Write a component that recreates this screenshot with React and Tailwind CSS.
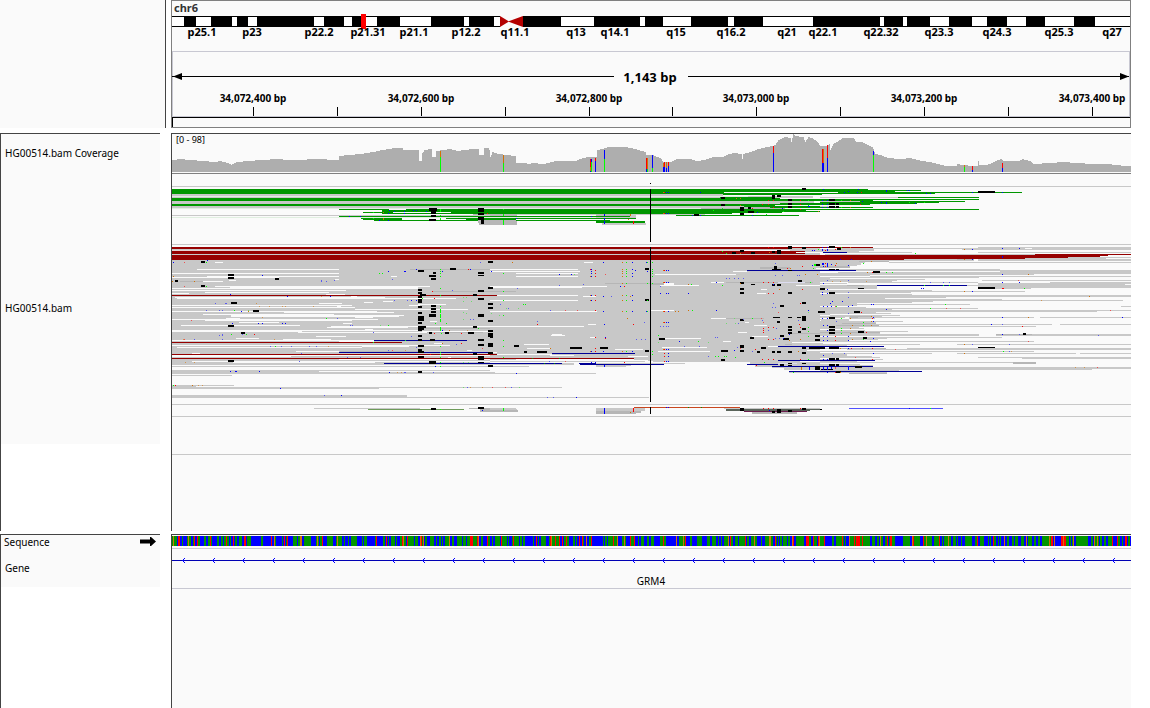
import React from "react";

const INK = "#000000";
const PAPER = "#fafafa";
const READ = "#c8c8c8";
const SHADE = "#b6b6b6";
const GREEN = "#009600";
const MAROON = "#960000";
const NAVY = "#000096";
const LIME = "#00ff00";
const BLUE = "#0000ff";
const RED = "#ff0000";
const ORANGE = "#d17105";
const PERI = "#5a5af0";

// Each entry is "x y", "x y x2" or "x y x2 y2" in thirds of a pixel, relative to the tile origin.
function toPath(text, ox, oy) {
  return text
    .split(",")
    .map((item) => {
      const n = item.trim().split(/\s+/).map(Number);
      const x = ox + (n.length === 2 ? Math.floor(n[0] / 3) : Math.round(n[0] / 3));
      const y = oy + (n.length === 4 ? Math.round(n[1] / 3) : Math.floor(n[1] / 3));
      const w = n.length === 2 ? 1 : ox + Math.round(n[2] / 3) - x;
      const h = n.length === 4 ? oy + Math.round(n[3] / 3) - y : 1;
      return `M${x} ${y}h${w}v${h}h${-w}z`;
    })
    .join("");
}

const tiles = [
  {
    x: 160,
    y: 128,
    layers: [
      [GREEN, "36 183 990 198,36 210 990 219,36 228 990 234,537 244 990,666 246 990 258,609 253 990,675 256 990,537 265 990,603 271 990,609 274 990,642 277 990"],
      [READ, "36 198 990 204,36 207 990 210,36 219 990 228,36 234 990 240,36 262 537,537 262 990"],
      ["#e0efe0", "36 205 990,36 241 990,36 268 990"],
      [PAPER, "687 244 738,609 250 666,699 253 873,666 259 810,726 271 858,726 274 918"],
      [SHADE, "939 258 990 261,954 276 990 285,957 285 990 291"],
      [MAROON, "36 357 990 363,36 369 990 378,36 381 990 396"],
      [READ, "36 363 990 366,36 378 990 381"],
      ["#e4d4d4", "36 367 990"],
      [INK, "807 240 831 249,813 249 828 258,813 261 828 267,807 273 828 279,954 240 972 252,954 255 972 261,954 267 972 276,963 276 972 288"],
      [LIME, "840 243 843 252,840 262,840 269 843 276,640 253,640 271"],
      [BLUE, "688 247,703 250,733 250,733 256,760 247,769 247,799 250,685 256,568 265,601 265,658 277,685 277"],
      [ORANGE, "670 253,670 271 672 276"],
      [RED, "982 256"],
    ],
  },
  {
    x: 490,
    y: 128,
    layers: [
      [GREEN, "0 183 990 198,0 210 990 219,0 228 990 240,0 243 990 252,0 252 876 258,0 265 420,0 271 438,0 274 318,318 276 465 285,558 262 927"],
      [READ, "0 198 699 204,0 207 774 210,0 219 972 228,0 234 762 240,774 204 969 210,0 258 645 261,0 285 81 291,318 258 438 270,336 285 468 291"],
      [GREEN, "699 199 990,690 207 846 210,870 225 990 228"],
      ["#e0efe0", "0 205 774,0 241 633,0 268 318"],
      [PAPER, "702 193 990,969 204 990 207,870 211 990,855 232 990,885 241 990,948 247 990,726 256 876,78 274 318,360 277 465"],
      [SHADE, "0 258 81 264,0 276 81 291,633 240 885 243,318 258 420 264,762 236 840 240"],
      [GREEN, "0 265 420,0 271 438,78 277 360,318 276 360 285,690 262 927"],
      [MAROON, "0 357 990 363,0 369 945 378,0 381 990 396"],
      [READ, "0 363 990 366,0 378 990 381,900 360 990 370,945 369 990 378"],
      ["#e4d4d4", "0 367 750"],
      [PAPER, "918 373 990"],
      [INK, "936 180 948 186,846 201 855 213,861 201 873 207,693 207 705 213,894 213 906 219,693 228 705 234,894 225 906 231,894 234 906 240,750 237 762 249,774 237 783 243,774 249 792 255,750 255 762 261,612 258 627 264,894 354 906 363,936 357 948 363,750 366 762 372,726 372 738 378,783 372 795 378,846 369 855 375,861 366 873 378"],
      [LIME, "40 243,39 258 42 264,39 276 42 291,697 241,709 376,669 247,955 217,955 232,880 250,828 259,985 364,697 370"],
      [BLUE, "529 193,535 193,631 193,529 256,535 256,342 258 345 264,342 270 345 276,342 279 345 288,303 265,79 271,606 262,630 262,787 262,802 253,877 241,955 235 960 238,967 367,972 367"],
      [RED, "523 193,523 256,430 280 432 288,835 217,850 217,931 217,817 229,835 229,850 238,931 229,931 244,787 241,835 358,850 358"],
      [ORANGE, "520 193,520 256,421 258 423 264,415 274,751 211,751 232,751 376,739 211,985 250,839 373"],
    ],
  },
  {
    x: 820,
    y: 128,
    layers: [
      [GREEN, "0 183 144 186,0 187 303,0 190 225,54 193 606,0 196 345,0 199 6,234 208 477,0 214 477,0 217 159,120 220 435,0 223 357,0 226 291,0 229 150,0 238 159,0 244 477"],
      [READ, "0 208 234,0 220 120,0 234 50 237"],
      [MAROON, "0 358 159,645 379 933,0 381 864 384,0 384 840 387,0 387 744 390,0 390 615 393,0 394 252"],
      [READ, "474 357 933 363,60 361 474,0 363 162 369,426 364 933,0 370 117,80 373 276,474 373 933,15 379 645,744 388 933,615 391 858,252 394 410,474 394 933"],
      [NAVY, "9 373 81"],
      [PAPER, "615 361 636,162 364 426"],
      [SHADE, "410 394 462"],
      [INK, "474 189 525 195,27 213 45 219,27 225 45 231,48 225 57 231,27 234 45 240,48 234 57 240,27 354 45 360,51 360 63 366"],
      [LIME, "64 217,64 238,64 358,268 223,313 223,285 376"],
      [BLUE, "9 184,115 184,199 187 201 192,262 187,268 187,73 193,85 190,112 193,319 196,331 196,457 193,547 193,7 217,22 217,126 220,184 223,199 222 201 228,286 226,7 229,22 229,7 238,22 238,7 358,22 358,457 364,547 361,598 361,6 364 9 369,22 363 24 369,547 384 549 390,457 394,60 394,95 394"],
      [RED, "124 193,121 229,15 367,46 364"],
      [ORANGE, "91 217,91 238,91 358,433 364,433 394"],
    ],
  },
  {
    x: 160,
    y: 260,
    layers: [
      [READ, "36 0 990 342,36 346 216,36 376 222,36 378 108 387,108 381 657 387,657 382 990,36 405 741 411,36 411 663 414,663 412 990,462 445 780"],
      [PAPER, "165 7 189,111 28 537,36 40 537,141 49 537,36 52 357,693 49 711,207 61 228,525 58 537,129 64 189,165 79 810,210 82 774,36 85 774,36 91 558,135 97 507,36 100 87,498 103 555,45 112 675,50 115 888,574 109 591,669 124 699,612 127 639,477 130 546,774 133 858,36 136 576,531 139 543,36 142 585,747 136 780,585 148 924,36 154 651,372 157 702,129 163 522,213 166 732,213 169 717,585 172 639,198 175 240,36 178 654,135 181 576,810 184 831,238 187 357,549 190 576,63 196 420,513 199 990,501 202 744,615 208 639,36 211 786,36 214 426,786 214 990,415 217 800,468 229 558,228 235 297,369 238 513,36 241 642,537 244 642,822 250 845,36 256 870,50 262 606,606 259 747,408 274 537,921 271 936,96 280 120,36 286 990,36 289 393,864 292 873,537 298 990,96 304 990,219 307 645,36 316 990,36 322 990,36 325 990,36 328 990,477 334 990"],
      [SHADE, "750 28 990,60 64 129,819 94 990,786 205 990,800 217 970,540 274 780"],
      [MAROON, "36 106 990,36 247 726,36 283 990,36 295 990"],
      [NAVY, "642 241 921,537 277 990,672 310 990"],
      ["#6e9b5a", "624 448 912"],
      [SHADE, "927 445 990,960 448 990 456"],
      [INK, "123 3 135 9,204 42 222 48,204 51 222 57,45 60 54 66,345 54 357 60,123 75 135 81,213 126 231 132,279 150 297 156,204 195 222 201,243 216 255 222,204 300 222 306,984 3 990 9,870 24 888 30,774 30 792 36,819 36 828 42,807 45 828 51,813 54 828 60,954 36 972 42,954 45 972 48,774 87 786 93,774 96 786 102,780 102 798 108,774 108 786 114,774 117 786 129,774 138 786 144,813 135 828 141,813 144 828 150,813 153 828 159,807 162 828 171,774 156 786 162,774 168 792 183,774 186 786 192,774 198 798 204,774 204 792 210,774 210 786 213,774 225 786 231,774 237 786 243,774 255 792 261,774 267 786 273,774 273 792 279,774 288 792 294,774 333 786 339,807 216 816 222,855 216 867 222,924 216 942 222,954 90 972 96,939 102 951 108,954 114 972 120,954 162 972 171,939 198 951 204,984 81 990 87,984 129 990 135,984 141 990 147,984 180 990 186,984 210 990 216,984 219 990 231,984 249 990 261,954 237 972 243,954 252 972 258,939 279 951 285,954 288 972 300,954 306 972 309,807 303 828 311,984 276 990 282,984 315 990 321,810 237 825 243,813 444 828 450,954 441 972 447"],
      [LIME, "139 7,658 40,667 40,841 28,841 34,841 40,841 49,139 79,841 85,841 106,223 151,499 175,841 138,841 147,840 150 843 159,840 162 843 174,840 177 843 186,859 190,826 190,685 196,840 201 843 213,787 115,844 220,214 223,259 223,736 241,640 247,346 259,841 259,841 283,841 276,841 292,841 307,841 319,841 448,955 205,40 376"],
      [BLUE, "142 1,40 7,307 46,685 34,733 34,736 34,931 28,847 34,769 28,211 103,382 109,511 109,754 121,769 121,244 154,295 190,307 190,367 190,376 190,847 211,211 334,226 334,229 334,298 334,688 337,361 385,826 319,967 451,544 406,217 190"],
      [PERI, "484 61,484 64,499 64,523 61,697 58,961 7,877 91,166 130,196 130,199 130,178 151,187 151,139 151,703 121,742 121,532 175,571 196,577 196,187 223,187 226,178 226,247 223,640 217,754 229,103 238,187 238,331 259,364 259,394 259,448 259,469 259,424 280,418 304,562 292,601 292,733 337,736 337,820 337,493 406,922 382,769 262,889 253,685 271,931 178,940 178"],
      [ORANGE, "103 64,40 49,37 64,265 154,868 211,847 250,97 376"],
      ["#d29650", "289 130,298 139,328 139,367 139,376 139,460 139,307 172,343 238,70 238,505 259,103 307,76 307,484 109,712 337,724 337,115 376,127 376,967 382,931 382,736 271,922 211"],
      ["#6edc6e", "910 112,919 112,934 124,910 124,910 157,919 160,910 178,661 196,910 307,925 307,910 382,265 151"],
      ["#f05050", "73 7,73 79,94 181,697 271,967 265,73 238"],
      [RED, "925 28,817 94,823 115,283 223,904 250,904 220,811 283,823 220,46 376"],
    ],
  },
  {
    x: 490,
    y: 260,
    layers: [
      [READ, "0 0 990 306,0 309 252 315,0 318 117 321,318 310 585,318 315 423 318,318 316 408 321,780 306 990 315,795 315 990 321,846 318 990 324,882 321 990 330,897 333 990 339,0 336 15 342,0 340 318,0 382 216,0 412 477,0 444 78 450,0 449 81,318 444 465 453,702 445 990"],
      [PAPER, "282 7 309,0 28 264,0 34 270,78 40 264,78 49 264,495 43 738,729 34 771,978 25 990,663 67 702,522 69 552 75,510 76 627,0 79 351,0 82 276,918 76 990,279 109 318,0 106 264,813 88 831,801 100 828,0 121 264,0 154 321,483 151 552,765 187 777,663 175 708,792 196 831,294 193 318,0 199 282,743 217 771,186 223 216,183 226 225,300 232 318,785 229 834,522 235 633,699 244 723,102 253 177,906 247 990,835 259 864,111 265 180,516 262 651,375 268 459,0 277 21,504 274 660,951 271 990,180 286 252,21 283 186,414 289 474,345 301 474,78 298 432,990 280 990,0 301 345,465 304 490,0 307 270,252 310 268,930 304 990"],
      [SHADE, "345 70 483,483 69 522 75,0 94 78,708 67 970,810 21 900 27,708 175 822,0 450 84 456,318 453 453 459,318 459 438 462,786 456 921 462,897 220 990,885 253 906"],
      ["#dcdcf0", "864 67 945,864 310 920"],
      [MAROON, "0 106 21,0 283 21,0 295 432"],
      [NAVY, "771 31 990,186 280 435,0 310 216,267 310 318,270 313 522,771 313 864,864 301 990,864 259 990,846 319 990,897 334 990"],
      ["#c8461e", "432 442 750"],
      ["#5a645a", "708 447 960 453,750 448 990"],
      ["#6e1e50", "762 454 951"],
      [INK, "0 3 9 9,0 81 9 87,0 129 9 135,0 141 9 147,0 180 9 186,0 210 9 216,0 219 9 234,0 249 9 261,0 276 9 282,0 315 9 321,465 24 477 30,465 117 477 123,465 270 477 276,72 255 87 261,102 273 111 279,141 273 171 279,240 261 276 267,330 261 354 267,507 234 525 240,750 66 762 72,783 72 795 75,750 84 762 90,750 96 762 102,846 72 855 78,861 72 873 78,924 60 936 66,852 18 861 27,846 27 873 30,894 30 906 32,975 12 990 18,894 96 906 102,936 126 948 132,870 135 882 141,849 171 870 174,894 171 906 174,921 171 933 174,936 168 948 183,861 183 870 189,894 198 906 204,894 207 906 213,894 216 906 222,936 204 948 210,924 213 933 219,750 177 762 183,870 225 882 231,878 234 897 240,780 231 792 237,813 261 828 267,750 255 762 264,693 270 714 276,693 297 705 303,750 270 762 276,802 273 811 279,846 273 855 279,861 273 873 279,894 273 906 279,936 261 948 267,957 261 990 267,936 276 948 282,870 312 882 318,894 309 906 312,894 315 906 319,936 309 948 312,975 318 990 330,975 225 990 231,975 237 990 243,984 153 990 159,750 444 762 453,846 453 855 459,861 447 873 459,894 450 906 456,936 444 948 450"],
      [LIME, "409 7,409 28,409 34,409 40,409 49,487 7,487 28,487 34,487 40,487 49,472 7,409 70,487 70,472 70,604 73,409 106,409 121,472 121,409 154,472 154,607 151,100 133,106 133,40 40,40 94,40 121,40 166,40 241,40 259,40 292,787 175,505 226,955 202,955 214,955 229,961 67,697 76,972 12 978 18,970 24,676 289,685 289,703 289,709 289,736 292,626 244,487 283,409 274,487 274,39 444 42 453,472 154,955 298,910 337,823 307"],
      [BLUE, "340 7,304 28,304 34,304 40,304 49,427 7,427 28,427 40,427 49,469 7,472 34,436 31,4 34,208 43,244 43,529 31,535 31,303 106,427 106,340 109,535 67,529 67,529 100,535 100,595 100,511 100,427 121,304 121,469 154,535 154,427 154,340 154,679 151,343 193,535 187,529 187,346 232,568 244,535 268,529 268,535 280,535 289,535 304,529 304,427 274,304 274,340 274,259 412,343 444 345 462,342 315 345 321,679 67,967 16,391 79,79 340,955 151,733 271,838 451,529 442,535 442,898 223,880 235,958 321 960 330,850 73,304 307,316 307"],
      [PERI, "364 109,280 73,208 76,82 85,253 43,709 55,718 55,733 55,745 55,760 55,856 46,877 46,922 46,928 46,856 10,31 133,55 145,181 151,142 184,439 238,454 238,466 238,463 187,511 199,520 199,529 199,535 199,511 79,850 130,856 142,847 142,760 178,817 181,925 181,745 190,676 232,682 232,583 259,628 259,172 412,190 412,64 382,178 304,859 205,835 211,856 235,868 235,787 274,655 289,742 262"],
      [RED, "301 28,316 31,316 40,316 49,523 31,523 67,316 106,316 121,403 79,316 151,523 154,523 187,523 268,523 280,523 289,523 304,316 274,316 265,430 193,142 193,346 235,430 444 432 456,835 67,850 67,820 67,892 24,936 20,835 100,850 100,931 130,937 88,820 205,820 211,820 217,835 202,850 202,835 238,850 238,931 202,817 298,835 298,850 298,931 298,928 193,820 445,835 445,850 445,403 307,799 316,316 232,796 268,931 445"],
      [ORANGE, "397 7,397 28,397 34,397 40,397 49,67 7,520 31,520 67,595 73,397 70,397 106,301 106,301 121,397 121,397 154,520 154,595 151,565 154,412 175,421 109,520 187,520 268,301 274,397 274,301 49,901 24,946 43,982 43,898 240,931 238,925 274,934 321 936 330,421 457,751 70,181 265,556 154,868 88"],
      ["#f05050", "346 43,226 151,262 151,7 382,46 382,814 175,820 188,226 304,751 265,865 157"],
      ["#6edc6e", "253 43,85 145,50 145,709 190,736 190,505 247,655 247,733 175,4 160,28 166,955 157,88 382"],
      [GREEN, "126 295,208 295,163 310,193 310,595 442,634 442"],
    ],
  },
  {
    x: 820,
    y: 260,
    layers: [
      [READ, "0 0 207 3,117 1 462,474 1 933,207 7 933,0 3 135 9,0 9 123 15,0 15 111 18,0 18 90 24,0 27 540 33,540 30 933 42,0 37 642,0 40 933,0 42 642 45,0 45 150 48,150 49 933,0 51 477 54,0 55 30,0 58 315,486 61 933,0 60 231 63,0 63 216 66,84 67 690,690 67 933,0 70 81,474 70 933,474 73 915,80 76 474,0 75 170 81,474 75 933 84,0 81 171 87,474 85 633,0 90 171 96,0 90 336 93,0 94 615,0 97 273,0 102 276 105,0 105 933 108,0 108 933 111,0 112 378,0 115 195,0 118 546,0 121 909,0 124 339,0 127 276,0 130 110,0 133 450,0 136 111,903 139 933,0 141 138 144,0 144 474 147,0 149 216,0 151 933,0 154 830,0 157 168,0 160 213,0 163 30,30 166 240,0 169 186,0 172 78,87 172 642,660 172 933,87 175 165,0 178 87,3 181 87,0 184 249,0 187 168,0 190 168,0 193 696,720 193 933,0 196 177,0 199 648,0 202 117,0 205 132,0 211 135,0 214 264,0 216 180 222,0 223 477,546 222 933 228,0 226 933,0 231 546 234,0 235 201,0 238 174,0 241 87,0 244 642,0 250 9,0 253 300,411 253 933,0 256 81,0 259 81,0 265 198,261 264 933 270,81 268 480,0 274 642,0 280 336,411 280 768,780 280 933,0 283 81,0 286 81,0 289 156,0 292 180,474 292 933,606 295 933,0 298 189,0 301 81,0 304 111,0 307 579,0 313 120,0 316 159,0 321 933 327,0 328 816,0 331 237,0 337 201"],
      [PAPER, "0 37 54,477 220 528 228,474 67 690,75 172 87"],
      [SHADE, "117 4 207,0 18 90 24,81 76 132,66 189 168,90 172 114,90 169 153,528 223 636,579 307 648 312,87 340 201,0 217 180,48 196 177,27 265 198"],
      [NAVY, "0 31 108,171 76 441,0 259 192,0 301 165,0 319 159,0 334 306"],
      ["#5050ff", "87 445 369"],
      [INK, "159 33 180 39,27 27 45 31,48 27 57 31,474 81 525 87,0 84 15 90,114 84 132 87,27 96 45 102,102 153 120 159,0 153 15 159,27 171 45 177,27 198 45 204,27 207 45 213,27 216 45 222,114 213 132 219,129 231 141 237,609 219 618 225,0 261 15 267,27 261 57 267,474 261 525 264,27 294 45 300,48 294 57 300,27 312 45 318,48 312 57 318,105 318 126 324,3 327 39 330,48 333 63 339,0 447 6 450"],
      [BLUE, "6 9 12 15,22 9 24 21,10 19,34 13,85 16,547 43,547 67,598 67,10 70,457 94,22 88,304 85,310 85,7 97,7 103,22 100,37 124,31 130,67 124,10 139,22 139,34 139,85 139,154 133,160 133,97 136,199 148,547 172,907 172,160 172,160 184,7 175,22 175,514 193,10 196,22 196,22 211,85 229,85 241,10 229,22 229,10 241,22 241,160 235,547 223,85 265,160 280,10 286,10 298,22 298,9 321 12 330,22 321 24 330,34 321 36 327,85 319 87 330,22 337,268 445,151 244"],
      [PERI, "85 61,22 61,331 67,370 67,388 67,85 97,85 112,85 160,49 184,547 193,835 226,457 253,568 253,73 280,37 280,598 223,285 445,568 274"],
      [RED, "16 10,16 19,46 16,157 37,547 85,124 157,157 175,46 229,46 241,607 199,139 217,94 265,157 265,157 298,46 337,550 85"],
      [ORANGE, "49 10,154 4,142 37,625 43,433 94,808 109,91 175,625 172,154 169,97 196,91 205,91 220,97 238,433 253,61 265,127 265,433 280,154 184,154 196,61 337"],
      ["#f05050", "595 61,379 145,421 145,46 139,871 151,625 244,226 268,46 321 48 327,832 322,106 292"],
      ["#d29650", "37 64,61 64,139 64,664 121,766 322,793 322,574 274"],
      [LIME, "130 10,199 37,217 37,370 76,388 76,313 76,613 85,64 175,64 205,64 211,64 220,130 187,130 196,130 238,331 145,376 133,550 274,331 445,49 139"],
    ],
  },
];

const profile = [
  [172, 160], [180, 159], [190, 160], [203, 161], [215, 162], [220, 161], [228, 163], [231, 165], [236, 162],
  [248, 161], [260, 160], [278, 159], [287, 160], [298, 160], [315, 159], [338, 160], [339, 156], [348, 155],
  [360, 154], [373, 152], [382, 150], [388, 149], [394, 148], [402, 148], [403, 150], [418, 150], [419, 161],
  [421, 161], [422, 153], [424, 150], [430, 149], [431, 149], [432, 157], [435, 157], [436, 151], [443, 150],
  [450, 149], [457, 151], [463, 150], [473, 149], [478, 149], [479, 155], [483, 155], [484, 148], [488, 148],
  [489, 150], [490, 157], [492, 152], [498, 154], [507, 155], [515, 156], [516, 163], [525, 163], [528, 164],
  [533, 163], [543, 164], [556, 161], [575, 161], [580, 159], [587, 157], [596, 157], [597, 150], [605, 148],
  [608, 147], [625, 147], [635, 149], [645, 152], [646, 155], [652, 155], [660, 158], [663, 162], [670, 162],
  [677, 159], [690, 159], [696, 161], [704, 160], [713, 157], [722, 157], [728, 154], [735, 153], [741, 154],
  [742, 159], [743, 154], [750, 152], [758, 149], [767, 147], [775, 145], [778, 140], [785, 137], [790, 138],
  [791, 142], [793, 134], [795, 136], [803, 137], [805, 142], [808, 137], [812, 138], [817, 142], [820, 146],
  [825, 146], [829, 144], [830, 150], [833, 144], [838, 141], [842, 138], [853, 138], [856, 142], [862, 142],
  [867, 145], [872, 147], [875, 154], [880, 155], [888, 158], [900, 159], [910, 158], [921, 161], [930, 162],
  [938, 164], [945, 166], [956, 166], [957, 164], [963, 165], [972, 166], [977, 166], [978, 161], [979, 165],
  [985, 165], [990, 164], [995, 161], [1001, 159], [1003, 161], [1018, 161], [1022, 159], [1030, 161],
  [1033, 164], [1050, 163], [1062, 162], [1078, 163], [1092, 164], [1107, 164], [1125, 166], [1131, 166],
];

function coveragePath() {
  let d = "M172 172";
  let k = 0;
  for (let x = 172; x < 1131; x++) {
    while (k < profile.length - 2 && profile[k + 1][0] <= x) k++;
    const [x0, y0] = profile[k];
    const [x1, y1] = profile[k + 1];
    const y = Math.round(y0 + ((y1 - y0) * (x - x0)) / (x1 - x0));
    d += `V${y}H${x + 1}`;
  }
  return d + "V172z";
}

// x, width, then stacked [top, colour] segments down to the baseline
const variants = [
  [440, 1, [[151, ORANGE], [157, LIME]]],
  [503, 1, [[155, ORANGE], [163, LIME]]],
  [590, 1, [[159, RED], [167, ORANGE], [171, BLUE]]],
  [591, 1, [[159, BLUE], [162, LIME]]],
  [595, 1, [[158, RED], [161, BLUE]]],
  [604, 1, [[150, BLUE], [159, LIME]]],
  [646, 1, [[158, RED], [169, BLUE]]],
  [647, 1, [[158, ORANGE], [169, LIME]]],
  [652, 1, [[155, BLUE], [168, LIME]]],
  [663, 1, [[163, ORANGE], [167, BLUE]]],
  [664, 1, [[162, RED], [167, BLUE]]],
  [666, 1, [[162, ORANGE], [168, BLUE]]],
  [668, 1, [[162, RED], [166, BLUE]]],
  [773, 1, [[146, RED], [153, BLUE]]],
  [822, 1, [[149, RED], [163, BLUE]]],
  [823, 1, [[149, ORANGE], [163, BLUE]]],
  [827, 1, [[145, RED], [158, BLUE]]],
  [873, 1, [[151, BLUE], [155, LIME]]],
  [964, 1, [[165, ORANGE], [167, LIME]]],
  [972, 1, [[166, RED], [170, BLUE]]],
  [1002, 1, [[163, RED], [168, BLUE]]],
];

const whiteBands = [
  [172, 184], [196, 211], [232, 237], [248, 257], [314, 324], [344, 352], [366, 377], [400, 431], [464, 469],
  [494, 500], [561, 594], [640, 645], [663, 691], [728, 734], [763, 813], [880, 884], [903, 907], [930, 949],
  [972, 987], [1007, 1026], [1045, 1074], [1095, 1130],
];

const bandLabels = [
  ["p25.1", 202], ["p23", 252], ["p22.2", 319], ["p21.31", 368], ["p21.1", 414], ["p12.2", 466], ["q11.1", 515],
  ["q13", 576], ["q14.1", 615], ["q15", 676], ["q16.2", 731], ["q21", 787], ["q22.1", 823], ["q22.32", 881],
  ["q23.3", 939], ["q24.3", 997], ["q25.3", 1059], ["q27", 1112],
];

const ticks = [253, 337, 421, 505, 589, 672, 756, 840, 924, 1008, 1092];
const tickLabels = [
  ["34,072,400 bp", 253], ["34,072,600 bp", 421], ["34,072,800 bp", 589],
  ["34,073,000 bp", 756], ["34,073,200 bp", 924], ["34,073,400 bp", 1092],
];

function Ruler() {
  return (
    <svg viewBox="172 1 958 126" className="block h-auto w-full font-['Noto_Sans',sans-serif] font-bold" role="img" aria-label="Chromosome 6 ideogram and ruler">
      <text x="174" y="12" fontSize="11" fill="#333">chr6</text>
      <g shapeRendering="crispEdges">
        <rect x="172" y="16" width="958" height="11" fill={INK} />
        {whiteBands.map(([a, b]) => <rect key={a} x={a} y="17" width={b - a} height="9" fill="#fff" />)}
        <rect x="500" y="16" width="23" height="11" fill={PAPER} />
        <rect x="361" y="14" width="5" height="15" fill={RED} />
      </g>
      <path d="M500 16L509 21.500L500 27zM523 16L508 21.500L523 27z" fill="#b40000" />
      {bandLabels.map(([t, x]) => <text key={t} x={x} y="36" fontSize="11" textAnchor="middle">{t}</text>)}
      <g shapeRendering="crispEdges">
        <path d="M172 51h958v1H172zM172 51h1v66h-1zM1129 51h1v66h-1zM172 116h958v1H172z" fill="#c8c8d2" />
        <path d="M172 76H614v1H172zM688 76h441v1H688zM172 117h958v1H172zM172 117h1v10h-1z" />
        {ticks.map((x) => <rect key={x} x={x} y="107" width="1" height="9" />)}
      </g>
      <path d="M173 76.500L182 73V80zM1129 76.500L1120 73V80z" />
      <text x="650" y="82" fontSize="13" textAnchor="middle">1,143 bp</text>
      {tickLabels.map(([t, x]) => <text key={t} x={x} y="102" fontSize="10" textAnchor="middle">{t}</text>)}
    </svg>
  );
}

function Alignments() {
  return (
    <svg viewBox="172 134 959 397" className="block h-auto w-full font-['Noto_Sans',sans-serif]" role="img" aria-label="Coverage and aligned reads">
      <g shapeRendering="crispEdges">
        <path d={coveragePath()} fill="#aeaeae" />
        {variants.map(([x, w, parts]) =>
          parts.map(([top, color], i) => (
            <rect key={x + "-" + top} x={x} y={top} width={w} height={(parts[i + 1] ? parts[i + 1][0] : 172) - top} fill={color} />
          ))
        )}
        <rect x="172" y="173" width="959" height="1" fill="#808080" />
        {[186, 244, 404, 416, 454].map((y) => <rect key={y} x="172" y={y} width="959" height="1" fill={READ} />)}
        {tiles.map((tile, i) =>
          tile.layers.map(([color, text], j) => <path key={i + "-" + j} d={toPath(text, tile.x, tile.y)} fill={color} />)
        )}
        <path d="M650 183h1v1h-1zM650 189h1v53h-1zM650 247h1v155h-1zM650 407h1v7h-1z" />
      </g>
      <text x="176" y="143" fontSize="9">[0 - 98]</text>
    </svg>
  );
}

function sequenceBars() {
  const colors = [GREEN, BLUE, RED, ORANGE];
  const paths = ["", "", "", ""];
  let seed = 4711;
  for (let x = 172; x < 1131; ) {
    seed = (seed * 48271) % 2147483647;
    const r = seed / 2147483647;
    const k = r < 0.42 ? 0 : r < 0.83 ? 1 : r < 0.95 ? 2 : 3;
    seed = (seed * 48271) % 2147483647;
    const w = Math.min(k < 2 && seed / 2147483647 < 0.5 ? 2 : 1, 1131 - x);
    paths[k] += `M${x} 536h${w}v10h${-w}z`;
    x += w;
  }
  return paths.map((d, i) => <path key={i} d={d} fill={colors[i]} />);
}

function Genes() {
  const arrows = Array.from({ length: 32 }, (_, i) => 182 + i * 30);
  return (
    <svg viewBox="172 535 959 54" className="block h-auto w-full font-['Noto_Sans',sans-serif]" role="img" aria-label="Sequence and gene GRM4">
      <g shapeRendering="crispEdges">
        {sequenceBars()}
        <path d="M172 548h959v1H172zM172 588h959v1H172z" fill="#c8c8d2" />
        <rect x="172" y="560" width="959" height="1" fill="#0000b4" />
        {arrows.map((x) => (
          <path key={x} d={`M${x} 560h1v1h-1zM${x + 1} 559h1v3h-1zM${x + 2} 558h1v1h-1zM${x + 2} 562h1v1h-1z`} fill={BLUE} />
        ))}
      </g>
      <text x="651" y="585" fontSize="10" textAnchor="middle">GRM4</text>
    </svg>
  );
}

export default function App() {
  return (
    <main className="flex min-h-screen flex-col bg-white pr-[19px] font-['Noto_Sans',sans-serif] text-[10px] leading-4 text-black">
      <header className="flex">
        <div className="w-[166px] shrink-0 border-r border-[#444] bg-[#fafafa]" />
        <div className="ml-[5px] min-w-0 flex-1 border border-[#808080] bg-[#fafafa]">
          <Ruler />
        </div>
      </header>

      <section className="mt-[5px] flex">
        <div className="w-[160px] shrink-0 border-t border-l border-[#444]">
          <div className="flex h-[38px] items-center bg-[#fafafa] pl-1">HG00514.bam Coverage</div>
          <div className="flex h-[272px] items-center bg-[#fafafa] pl-1">HG00514.bam</div>
        </div>
        <div className="ml-[11px] min-w-0 flex-1 border-t border-l border-[#444] bg-[#fafafa]">
          <Alignments />
        </div>
      </section>

      <section className="mt-[3px] flex flex-1">
        <div className="w-[160px] shrink-0 border-t border-l border-[#444]">
          <div className="flex h-[14px] items-center justify-between bg-[#fafafa] pr-1 pl-[3px]">
            <span>Sequence</span>
            <svg viewBox="0 0 16 10" className="h-[10px] w-4" aria-hidden="true">
              <path d="M0 2.500H10V0H11L16 4.500L11 9H10V6.500H0z" />
            </svg>
          </div>
          <div className="flex h-[38px] items-center bg-[#fafafa] pl-1">Gene</div>
        </div>
        <div className="ml-[11px] min-w-0 flex-1 border-t border-l border-[#444] bg-[#fafafa]">
          <Genes />
        </div>
      </section>
    </main>
  );
}
